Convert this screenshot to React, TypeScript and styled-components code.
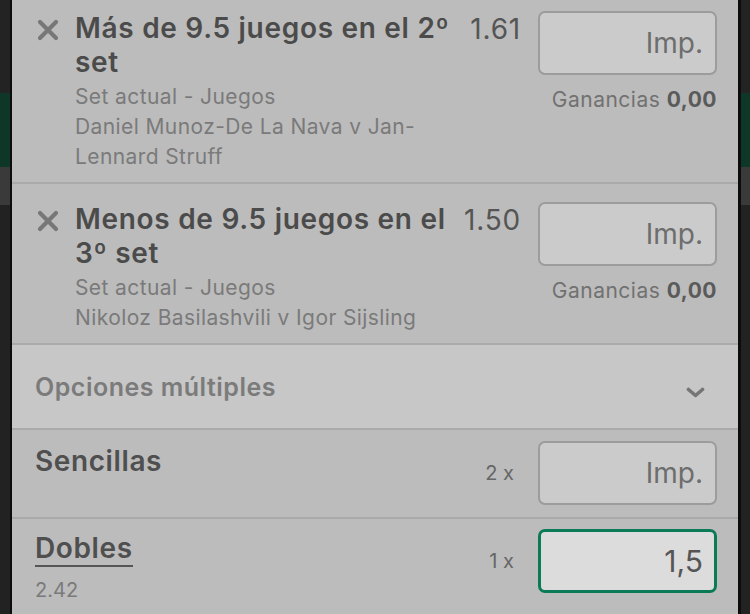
import * as React from 'react'
import styled, { createGlobalStyle } from 'styled-components'

const GlobalStyle = createGlobalStyle`
  html, body {
    margin: 0;
    padding: 0;
    height: 614px;
    overflow: hidden;
    background: #1f1f1f;
  }
  * {
    box-sizing: border-box;
  }
`

const Screen = styled.div`
  display: flex;
  width: 750px;
  height: 614px;
  font-family: Inter, 'Noto Sans', sans-serif;
  background: #1f1f1f;
`

const Strip = styled.div<{ $w: number }>`
  width: ${(p) => p.$w}px;
  display: flex;
  flex-direction: column;
  flex-shrink: 0;
`

const Band = styled.div<{ $h?: number; $color: string }>`
  height: ${(p) => (p.$h ? `${p.$h}px` : 'auto')};
  flex: ${(p) => (p.$h ? '0 0 auto' : '1')};
  background: ${(p) => p.$color};
`

const Panel = styled.div`
  width: 731px;
  flex-shrink: 0;
  background: #bcbcbc;
  border-left: 2px solid #0c0c0c;
  border-right: 3px solid #0c0c0c;
  overflow: hidden;
  display: flex;
  flex-direction: column;
`

const BetRow = styled.div<{ $first?: boolean }>`
  display: grid;
  grid-template-columns: 63px 1fr auto 179px;
  align-items: start;
  padding: 18px 21px 10px 0;
  margin-top: ${(p) => (p.$first ? '-7px' : '0')};
  border-bottom: 2px solid #aaaaaa;
`

const RemoveIcon = styled.div`
  padding: 8px 0 0 25px;
  height: 34px;
`

const BetInfo = styled.div`
  padding-right: 10px;
`

const BetTitle = styled.div`
  font-size: 28px;
  line-height: 34px;
  font-weight: 600;
  color: #4b4b4b;
  letter-spacing: 0.7px;
  margin-bottom: 3px;
`

const SubLine = styled.div`
  font-size: 21px;
  line-height: 30px;
  color: #7a7a7a;
  letter-spacing: 0.4px;
`

const Odds = styled.div`
  font-size: 28px;
  line-height: 34px;
  color: #555555;
  padding-right: 17px;
  padding-top: 1px;
  letter-spacing: 0.8px;
`

const StakeCol = styled.div`
  display: flex;
  flex-direction: column;
  align-items: flex-end;
`

const StakeBox = styled.div<{ $active?: boolean }>`
  width: 179px;
  height: 64px;
  border-radius: 7px;
  border: ${(p) => (p.$active ? '3px solid #0b7a57' : '2px solid #9c9c9c')};
  background: ${(p) => (p.$active ? '#dcdcdc' : '#cbcbcb')};
  display: flex;
  align-items: center;
  justify-content: flex-end;
  padding-right: ${(p) => (p.$active ? '11px' : '12px')};
  font-size: ${(p) => (p.$active ? '30px' : '28px')};
  color: ${(p) => (p.$active ? '#555555' : '#6d6d6d')};
`

const Winnings = styled.div`
  margin-top: 10px;
  font-size: 21px;
  line-height: 30px;
  color: #717171;
  letter-spacing: 0.5px;
  b {
    font-weight: 700;
    color: #5a5a5a;
  }
`

const MultiHeader = styled.div`
  height: 85px;
  flex-shrink: 0;
  display: flex;
  align-items: center;
  justify-content: space-between;
  padding: 0 33px 0 23px;
  background: #c7c7c7;
  border-bottom: 2px solid #aaaaaa;
  font-size: 25px;
  font-weight: 600;
  color: #7b7b7b;
  letter-spacing: 0.5px;
  svg {
    margin-top: 12px;
  }
`

const MultiRow = styled.div<{ $pad: number }>`
  display: grid;
  grid-template-columns: 1fr auto 179px;
  column-gap: 24px;
  padding: ${(p) => p.$pad}px 21px 11px 23px;
  border-bottom: 2px solid #aaaaaa;
  min-height: 89px;
  flex-shrink: 0;
`

const MultiName = styled.div`
  display: flex;
  flex-direction: column;
  align-items: flex-start;
`

const MultiLabel = styled.span<{ $underline?: boolean }>`
  display: inline-block;
  font-size: 28px;
  font-weight: 600;
  color: #4f4f4f;
  letter-spacing: 0.6px;
  line-height: ${(p) => (p.$underline ? '34px' : '40px')};
  margin-top: ${(p) => (p.$underline ? '2px' : '0')};
  border-bottom: ${(p) => (p.$underline ? '2px solid #555555' : 'none')};
`

const MultiOdds = styled.div`
  margin-top: 8px;
  font-size: 20px;
  line-height: 30px;
  color: #7a7a7a;
`

const Count = styled.div`
  height: 64px;
  display: flex;
  align-items: center;
  font-size: 20px;
  color: #666666;
`

const CrossIcon = () => (
  <svg width="22" height="22" viewBox="0 0 22 22">
    <path d="M3 3 L19 19 M19 3 L3 19" stroke="#777777" strokeWidth="4.2" strokeLinecap="round" />
  </svg>
)

const Chevron = () => (
  <svg width="19" height="11" viewBox="0 0 19 11">
    <path d="M2.5 2.5 L9.5 8.5 L16.5 2.5" stroke="#757575" strokeWidth="3.6" fill="none" strokeLinecap="round" strokeLinejoin="round" />
  </svg>
)

type Bet = {
  title: string
  market: string
  players: string
  odds: string
}

const bets: Bet[] = [
  {
    title: 'Más de 9.5 juegos en el 2º set',
    market: 'Set actual - Juegos',
    players: 'Daniel Munoz-De La Nava v Jan-Lennard Struff',
    odds: '1.61',
  },
  {
    title: 'Menos de 9.5 juegos en el 3º set',
    market: 'Set actual - Juegos',
    players: 'Nikoloz Basilashvili v Igor Sijsling',
    odds: '1.50',
  },
]

const SideStrip = ({ w }: { w: number }) => (
  <Strip $w={w}>
    <Band $h={93} $color="#232323" />
    <Band $h={74} $color="#0e3727" />
    <Band $h={38} $color="#3a3a3a" />
    <Band $color="#222222" />
  </Strip>
)

const App = () => {
  return (
    <Screen>
      <GlobalStyle />
      <SideStrip w={10} />
      <Panel>
        {bets.map((bet, i) => (
          <BetRow key={bet.title} $first={i === 0}>
            <RemoveIcon>
              <CrossIcon />
            </RemoveIcon>
            <BetInfo>
              <BetTitle>{bet.title}</BetTitle>
              <SubLine>{bet.market}</SubLine>
              <SubLine>{bet.players}</SubLine>
            </BetInfo>
            <Odds>{bet.odds}</Odds>
            <StakeCol>
              <StakeBox>Imp.</StakeBox>
              <Winnings>
                Ganancias <b>0,00</b>
              </Winnings>
            </StakeCol>
          </BetRow>
        ))}
        <MultiHeader>
          <span>Opciones múltiples</span>
          <Chevron />
        </MultiHeader>
        <MultiRow $pad={11}>
          <MultiName>
            <MultiLabel>Sencillas</MultiLabel>
          </MultiName>
          <Count>2 x</Count>
          <StakeBox>Imp.</StakeBox>
        </MultiRow>
        <MultiRow $pad={10}>
          <MultiName>
            <MultiLabel $underline>Dobles</MultiLabel>
            <MultiOdds>2.42</MultiOdds>
          </MultiName>
          <Count>1 x</Count>
          <StakeBox $active>1,5</StakeBox>
        </MultiRow>
      </Panel>
      <SideStrip w={9} />
    </Screen>
  )
}

export default App
